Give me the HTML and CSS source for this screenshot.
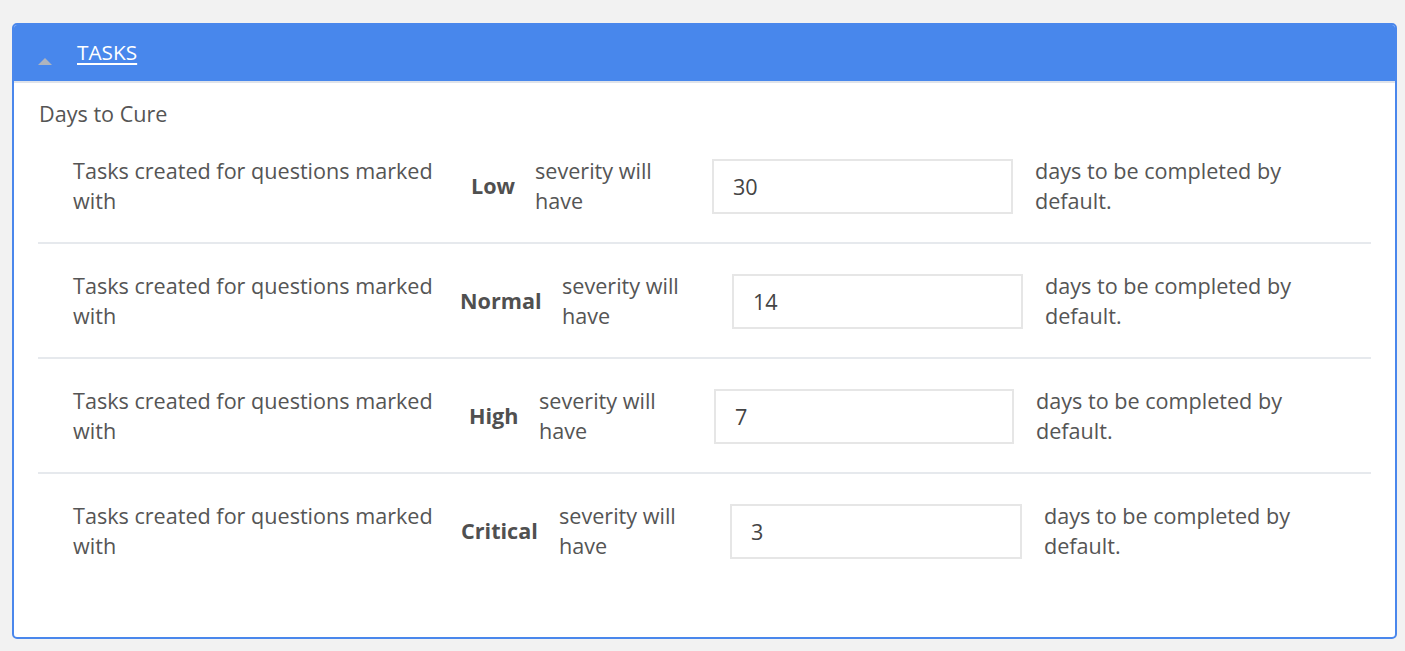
FILE: index.html
```html
<!DOCTYPE html>
<html>
<head>
<meta charset="utf-8">
<link rel="stylesheet" href="styles.css">
</head>
<body>
<div class="card">
  <div class="card-header">
    <span class="caret"></span>
    <a class="title" href="#">TASKS</a>
  </div>
  <div class="card-body">
    <div class="section-label">Days to Cure</div>
    <div class="rule rule-low">
      <div class="desc">Tasks created for questions marked with</div>
      <div class="sev">Low</div>
      <div class="mid">severity will have</div>
      <div class="val"><input class="days" type="text" value="30"></div>
      <div class="tail">days to be completed by default.</div>
    </div>
    <div class="rule rule-normal">
      <div class="desc">Tasks created for questions marked with</div>
      <div class="sev">Normal</div>
      <div class="mid">severity will have</div>
      <div class="val"><input class="days" type="text" value="14"></div>
      <div class="tail">days to be completed by default.</div>
    </div>
    <div class="rule rule-high">
      <div class="desc">Tasks created for questions marked with</div>
      <div class="sev">High</div>
      <div class="mid">severity will have</div>
      <div class="val"><input class="days" type="text" value="7"></div>
      <div class="tail">days to be completed by default.</div>
    </div>
    <div class="rule rule-critical">
      <div class="desc">Tasks created for questions marked with</div>
      <div class="sev">Critical</div>
      <div class="mid">severity will have</div>
      <div class="val"><input class="days" type="text" value="3"></div>
      <div class="tail">days to be completed by default.</div>
    </div>
  </div>
</div>
</body>
</html>
```
FILE: styles.css
```css
html, body {
  margin: 0;
  padding: 0;
}
body {
  background: #f2f2f2;
  font-family: "Open Sans", "Liberation Sans", sans-serif;
  color: #555555;
  padding: 23px 8px 12px 12px;
  height: 651px;
  box-sizing: border-box;
}
.card {
  background: #ffffff;
  border: 2px solid #4a87ec;
  border-radius: 5px;
  height: 616px;
  box-sizing: border-box;
  overflow: hidden;
}
.card-header {
  background: #4887ec;
  height: 56px;
  border-bottom: 2px solid #dfe3ea;
  display: flex;
  align-items: center;
}
.caret {
  width: 0;
  height: 0;
  border-left: 7px solid transparent;
  border-right: 7px solid transparent;
  border-bottom: 7px solid #aeb4be;
  margin-left: 24px;
  margin-top: 16px;
}
.title {
  color: #ffffff;
  font-size: 20.8px;
  text-decoration: underline;
  text-underline-offset: 3px;
  margin-left: 25px;
  margin-top: -2px;
}
.card-body {
  padding: 16px 24px 0 24px;
}
.section-label {
  font-size: 21.6px;
  line-height: 30px;
  padding-left: 1px;
}
.rule {
  display: grid;
  align-items: center;
  padding: 27px 0 26px 35px;
  border-bottom: 2px solid #e6e9ed;
  font-size: 21.6px;
  line-height: 30px;
}
.rule:first-of-type {
  margin-top: 1px;
}
.rule:last-child {
  border-bottom: none;
}
.rule-low { grid-template-columns: 398px 64px 177px 301px 1fr; }
.rule-normal { grid-template-columns: 387px 102px 170px 291px 1fr; }
.rule-high { grid-template-columns: 396px 70px 175px 300px 1fr; }
.rule-critical { grid-template-columns: 388px 98px 171px 292px 1fr; }
.desc {
  padding-right: 20px;
}
.sev {
  font-weight: 700;
  color: #505050;
}
.mid {
  padding-right: 40px;
}
.tail {
  padding-left: 22px;
  max-width: 262px;
}
.days {
  display: block;
  width: 100%;
  height: 55px;
  box-sizing: border-box;
  border: 2px solid #e6e6e6;
  padding: 0 19px;
  font-family: "Open Sans", "Liberation Sans", sans-serif;
  font-size: 21.6px;
  color: #444444;
  font-weight: 500;
  outline: none;
}
```
